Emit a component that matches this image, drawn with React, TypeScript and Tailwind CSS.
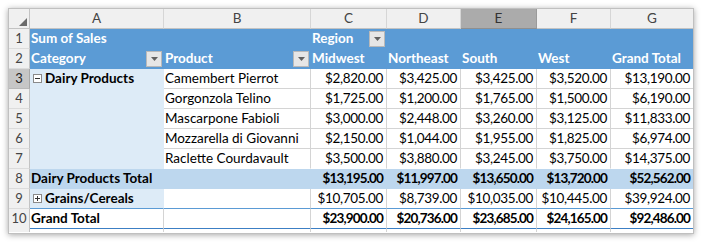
import React from "react";

const products: [string, string, string, string, string, string][] = [
  ["Camembert Pierrot", "$2,820.00", "$3,425.00", "$3,425.00", "$3,520.00", "$13,190.00"],
  ["Gorgonzola Telino", "$1,725.00", "$1,200.00", "$1,765.00", "$1,500.00", "$6,190.00"],
  ["Mascarpone Fabioli", "$3,000.00", "$2,448.00", "$3,260.00", "$3,125.00", "$11,833.00"],
  ["Mozzarella di Giovanni", "$2,150.00", "$1,044.00", "$1,955.00", "$1,825.00", "$6,974.00"],
  ["Raclette Courdavault", "$3,500.00", "$3,880.00", "$3,245.00", "$3,750.00", "$14,375.00"],
];
const dairyTotal = ["$13,195.00", "$11,997.00", "$13,650.00", "$13,720.00", "$52,562.00"];
const grains = ["$10,705.00", "$8,739.00", "$10,035.00", "$10,445.00", "$39,924.00"];
const grand = ["$23,900.00", "$20,736.00", "$23,685.00", "$24,165.00", "$92,486.00"];

function Filter() {
  return (
    <span className="ml-auto mr-[1px] flex h-[16px] w-[16px] shrink-0 items-center justify-center border border-[#b9b9b9] bg-[#e6e6e6]">
      <svg width="7" height="4" viewBox="0 0 7 4">
        <path d="M0 0H7L3.5 4Z" fill="#616161" />
      </svg>
    </span>
  );
}

function Toggle({ plus }: { plus?: boolean }) {
  return (
    <svg width="9" height="9" viewBox="0 0 9 9" className="ml-[3px] mr-[3px] shrink-0">
      <rect x="0.5" y="0.5" width="8" height="8" fill="white" stroke="#8a8a8a" />
      <path d="M2 4.5H7" stroke="#333" />
      {plus && <path d="M4.5 2V7" stroke="#333" />}
    </svg>
  );
}

const base = "flex h-[20px] items-center overflow-hidden whitespace-nowrap border-r border-b leading-[19px]";
const rowHdr = "flex h-[20px] items-center justify-center border-r border-b border-r-[#c3c3c3] border-b-[#dcdcdc] bg-[#f0f0f0] text-[13px] text-[#444]";
const rowHdrSel = "flex h-[20px] items-center justify-center border-r border-b border-r-[#a8a8a8] border-b-[#b8b8b8] bg-[#c6c6c6] text-[13px] text-[#222]";
const blue = `${base} border-[#5b9bd5] bg-[#5b9bd5] font-bold text-white`;
const white = `${base} border-[#d4d4d4] bg-white text-black`;
const light = `${base} border-[#ddebf7] bg-[#ddebf7] text-black`;
const total = `${base} border-[#bdd7ee] bg-[#bdd7ee] font-bold text-black`;
const num = "justify-end pr-[3px] tracking-[-0.35px]";
const bnum = "justify-end pr-[3px] tracking-[-0.85px]";

export default function App() {
  const letters = ["A", "B", "C", "D", "E", "F", "G"];
  return (
    <div className="h-[242px] w-[706px] bg-white p-2 font-['Lato',sans-serif] text-[13.5px]">
      <div className="grid h-[226px] w-[686px] grid-cols-[21px_134px_147px_76px_74px_76px_74px_82px] grid-rows-[20px_20px_20px_20px_20px_20px_20px_20px_20px_20px_20px_21px_3px] overflow-hidden border border-[#c0c0c0] bg-white shadow-[0_1px_6px_rgba(0,0,0,0.35)]">
        {/* column header row */}
        <div className="relative h-[20px] border-r border-b border-r-[#c3c3c3] border-b-[#c3c3c3] bg-[#f0f0f0]">
          <svg width="8" height="8" viewBox="0 0 8 8" className="absolute bottom-[2px] right-[2px]">
            <path d="M8 0V8H0Z" fill="#6b6b6b" />
          </svg>
        </div>
        {letters.map((l) => (
          <div
            key={l}
            className={`flex h-[20px] items-center justify-center border-r border-b text-[13.5px] ${
              l === "E"
                ? "border-r-[#9a9a9a] border-b-[#8f8f8f] bg-[#ababab] text-[#333]"
                : "border-r-[#d6d6d6] border-b-[#c3c3c3] bg-[#f0f0f0] text-[#444]"
            } ${l === "G" ? "border-r-0" : ""}`}
          >
            {l}
          </div>
        ))}

        {/* row 1 */}
        <div className={rowHdr}>1</div>
        <div className={`${blue} pl-[1px]`}>Sum of Sales</div>
        <div className={blue}></div>
        <div className={`${blue} pl-[1px]`}>
          Region
          <Filter />
        </div>
        <div className={blue}></div>
        <div className={blue}></div>
        <div className={blue}></div>
        <div className={`${blue} border-r-0`}></div>

        {/* row 2 */}
        <div className={rowHdr}>2</div>
        <div className={`${blue} pl-[1px]`}>
          Category
          <Filter />
        </div>
        <div className={`${blue} pl-[1px]`}>
          Product
          <Filter />
        </div>
        <div className={`${blue} pl-[1px]`}>Midwest</div>
        <div className={`${blue} pl-[1px]`}>Northeast</div>
        <div className={`${blue} pl-[1px]`}>South</div>
        <div className={`${blue} pl-[1px]`}>West</div>
        <div className={`${blue} border-r-0 pl-[1px]`}>Grand Total</div>

        {/* rows 3-7 */}
        {products.map((p, i) => (
          <React.Fragment key={p[0]}>
            <div className={i === 0 ? rowHdrSel : rowHdr}>{i + 3}</div>
            <div className={`${light} font-bold`}>
              {i === 0 && (
                <>
                  <Toggle />
                  Dairy Products
                </>
              )}
            </div>
            <div className={`${white} pl-[1px] ${i === 4 ? "border-b-white" : ""}`}>{p[0]}</div>
            {p.slice(1).map((v, j) => (
              <div
                key={j}
                className={`${white} ${num} ${j === 4 ? "border-r-0" : ""} ${i === 4 ? "border-b-white" : ""}`}
              >
                {v}
              </div>
            ))}
          </React.Fragment>
        ))}

        {/* row 8 */}
        <div className={rowHdr}>8</div>
        <div className={`${total} pl-[1px]`}>Dairy Products Total</div>
        <div className={total}></div>
        {dairyTotal.map((v, j) => (
          <div key={j} className={`${total} ${bnum} ${j === 4 ? "border-r-0" : ""}`}>
            {v}
          </div>
        ))}

        {/* row 9 */}
        <div className={rowHdr}>9</div>
        <div className={`${light} border-b-[#5b9bd5] font-bold`}>
          <Toggle plus />
          Grains/Cereals
        </div>
        <div className={`${white} border-b-[#5b9bd5]`}></div>
        {grains.map((v, j) => (
          <div key={j} className={`${white} ${num} border-b-[#5b9bd5] ${j === 4 ? "border-r-0" : ""}`}>
            {v}
          </div>
        ))}

        {/* row 10 */}
        <div className={`${rowHdr} h-[21px] text-[12.5px]`}>10</div>
        <div className={`${white} h-[21px] border-b-2 border-b-[#3c7fc4] pl-[1px] font-bold`}>Grand Total</div>
        <div className={`${white} h-[21px] border-b-2 border-b-[#3c7fc4]`}></div>
        {grand.map((v, j) => (
          <div
            key={j}
            className={`${white} ${bnum} h-[21px] border-b-2 border-b-[#3c7fc4] font-bold ${j === 4 ? "border-r-0" : ""}`}
          >
            {v}
          </div>
        ))}

        {/* partial row 11 */}
        <div className="h-[3px] border-r border-r-[#c3c3c3] bg-[#f0f0f0]"></div>
        {letters.map((l) => (
          <div key={l} className={`h-[3px] bg-white ${l === "G" ? "" : "border-r border-r-[#d4d4d4]"}`}></div>
        ))}
      </div>
    </div>
  );
}
